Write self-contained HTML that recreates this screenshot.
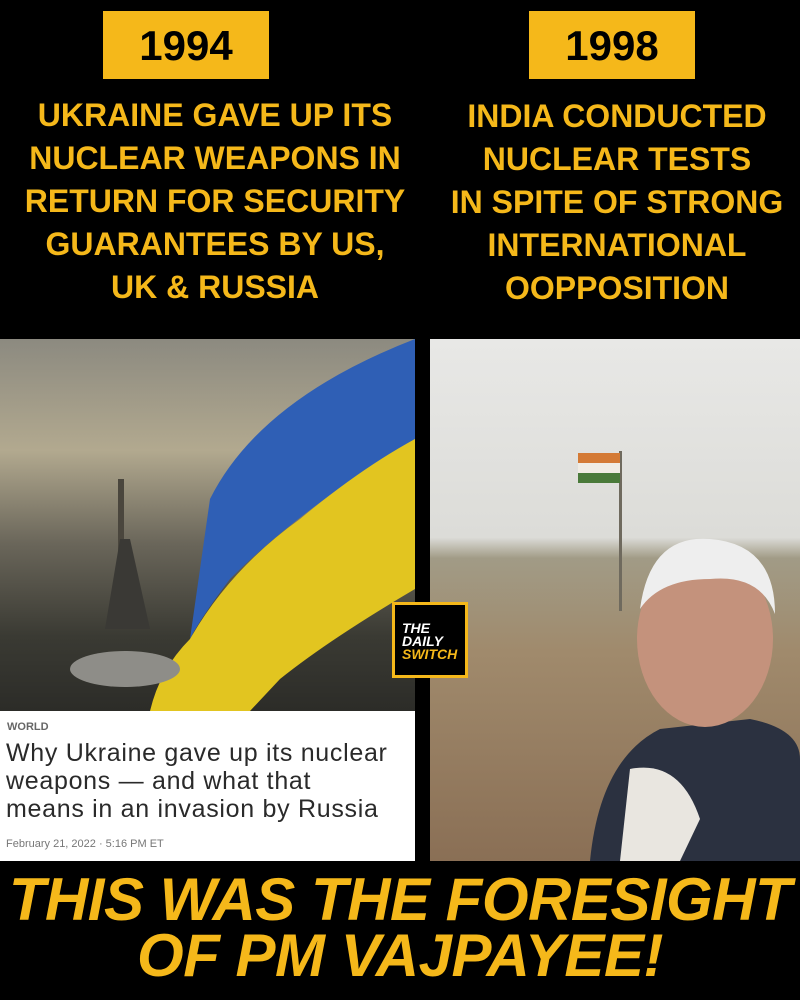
<!DOCTYPE html>
<html><head><style>
*{margin:0;padding:0;box-sizing:border-box}
body{width:800px;height:1000px;background:#000;position:relative;overflow:hidden;font-family:"Liberation Sans",sans-serif}
.yr{position:absolute;top:11px;height:68px;background:#f5b81a;color:#000;font-weight:bold;font-size:42px;text-align:center;line-height:70px;font-family:"Liberation Sans",sans-serif}
.hd{position:absolute;top:94px;color:#f5b81a;font-weight:bold;font-size:32px;line-height:43px;text-align:center;white-space:nowrap}
.ft{position:absolute;left:0;width:800px;color:#f5b81a;font-weight:bold;font-style:italic;font-size:60px;text-align:center;line-height:54px;letter-spacing:-0.5px;white-space:nowrap}
</style></head><body>
<div class="yr" style="left:103px;width:166px">1994</div>
<div class="yr" style="left:529px;width:166px">1998</div>
<div class="hd" style="left:10px;width:410px">UKRAINE GAVE UP ITS<br>NUCLEAR WEAPONS IN<br>RETURN FOR SECURITY<br>GUARANTEES BY US,<br>UK &amp; RUSSIA</div>
<div class="hd" style="left:432px;width:370px;top:95px">INDIA CONDUCTED<br>NUCLEAR TESTS<br>IN SPITE OF STRONG<br>INTERNATIONAL<br>OOPPOSITION</div>

<div style="position:absolute;left:0;top:339px;width:415px;height:372px;background:linear-gradient(180deg,#8c8a80 0%,#b2a98f 30%,#6a665a 55%,#3a3a33 80%,#2c2c28 100%);overflow:hidden">
 <svg width="415" height="372" style="position:absolute;left:0;top:0">
  <path d="M210 160 Q260 60 415 0 L415 100 Q300 170 230 240 Q200 280 190 300 Z" fill="#2f5fb5"/>
  <path d="M190 300 Q230 230 300 180 Q360 130 415 100 L415 250 Q330 300 280 340 L250 372 L150 372 Q160 330 190 300 Z" fill="#e2c520"/>
  <rect x="118" y="140" width="6" height="120" fill="#4a463d"/>
  <path d="M105 290 L120 200 L130 200 L150 290 Z" fill="#3a3935"/>
  <ellipse cx="125" cy="330" rx="55" ry="18" fill="#8e8d88"/>
 </svg>
</div>
<div style="position:absolute;left:0;top:711px;width:415px;height:150px;background:#fff">
 <div style="position:absolute;left:7px;top:10px;font-size:11px;font-weight:bold;color:#666">WORLD</div>
 <div style="position:absolute;left:6px;top:28px;font-size:25px;line-height:28px;letter-spacing:0.7px;color:#2a2a2a;white-space:nowrap">Why Ukraine gave up its nuclear<br>weapons — and what that<br>means in an invasion by Russia</div>
 <div style="position:absolute;left:6px;top:127px;font-size:11px;color:#777">February 21, 2022 · 5:16 PM ET</div>
</div>

<div style="position:absolute;left:430px;top:339px;width:370px;height:522px;background:linear-gradient(180deg,#e8e8e6 0%,#dcdcd8 38%,#a19b86 42%,#a08a6c 60%,#8a6f55 100%);overflow:hidden">
 <svg width="370" height="522" style="position:absolute;left:0;top:0">
  <rect x="189" y="112" width="3" height="160" fill="#6f6a5e"/>
  <rect x="148" y="114" width="42" height="10" fill="#d47a35"/>
  <rect x="148" y="124" width="42" height="10" fill="#f0ece4"/>
  <rect x="148" y="134" width="42" height="10" fill="#4a7a3a"/>
  <path d="M160 522 Q170 420 230 390 L320 380 Q370 390 370 420 L370 522 Z" fill="#2b3140"/>
  <path d="M200 430 Q250 420 270 480 L250 522 L190 522 Z" fill="#e9e6e0"/>
  <ellipse cx="275" cy="300" rx="68" ry="88" fill="#c4927c"/>
  <path d="M210 270 Q220 195 280 200 Q345 205 345 275 Q330 235 280 240 Q230 240 210 270Z" fill="#eeeeee"/>
 </svg>
</div>

<div style="position:absolute;left:392px;top:602px;width:76px;height:76px;background:#000;border:3px solid #f5b81a;padding:17px 0 0 7px;font-weight:bold;font-style:italic;font-size:14px;line-height:13px;color:#fff">THE<br>DAILY<br><span style="color:#f5b81a">SWITCH</span></div>

<div class="ft" style="top:873px">THIS WAS THE FORESIGHT</div>
<div class="ft" style="top:929px">OF PM VAJPAYEE!</div>
</body></html>
